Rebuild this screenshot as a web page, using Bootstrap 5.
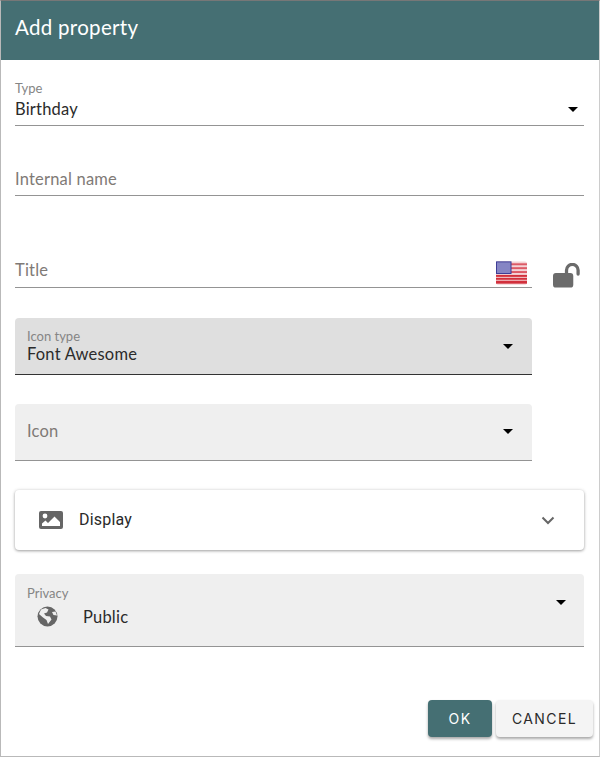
<!DOCTYPE html>
<html lang="en">
<head>
    <meta charset="UTF-8" />
    <meta name="viewport" content="width=device-width, initial-scale=1" />
    <title>Add property</title>
    <link href="https://cdn.jsdelivr.net/npm/bootstrap@5.3.0/dist/css/bootstrap.min.css" rel="stylesheet" />
    <style>
        html, body { height: 100%; }
        body { font-family: "Lato", "Liberation Sans", sans-serif; background: #fff; color: #2b2b2b; }
        .dialog { width: 600px; height: 757px; border: 1px solid #b9b9b9; border-top-color: #777; border-right-color: #ccc; }
        .dialog-head { height: 59px; background: #456f73; color: #fff; font-size: 20.5px; padding: 0 0 6px 14px; letter-spacing: .3px; }
        .dialog-body { padding: 0 15px 0 14px; }
        .field { position: relative; border-bottom: 1px solid #949494; }
        .field-label { font-size: 13px; line-height: 14px; color: #858585; }
        .field-value { font-size: 16.500px; line-height: 20px; color: #2b2b2b; letter-spacing: .2px; }
        .placeholder-text { font-size: 16.500px; line-height: 20px; color: #7f7a76; letter-spacing: .2px; }
        .caret-down { width: 0; height: 0; border-left: 5px solid transparent; border-right: 5px solid transparent; border-top: 5px solid #000; }
        .type-field { height: 59px; margin-top: 7px; padding-top: 14px; }
        .type-field .field-value { margin-top: 4px; }
        .type-field .caret-down { margin: 26px 6px 0 0; }
        .name-field { height: 46px; margin-top: 24px; padding-top: 19px; }
        .title-row { margin-top: 44px; }
        .title-field { width: 517px; height: 48px; padding-top: 20px; }
        .flag { position: absolute; right: 5px; top: 21px; }
        .lock { margin-left: 21px; }
        .filled { width: 517px; border-radius: 4px 4px 0 0; background: #efefef; padding-left: 12px; padding-right: 19px; }
        .filled.active { background: #dfdfdf; border-bottom-color: #333; height: 57px; margin-top: 30px; }
        .filled.active .field-label { margin-bottom: 1px; }
        .filled.icon-field { height: 57px; margin-top: 29px; padding-bottom: 2px; }
        .panel { height: 60px; margin-top: 29px; border-radius: 4px; background: #fff; box-shadow: 0 1px 3px rgba(0,0,0,.35), 0 0 4px rgba(0,0,0,.08); padding: 0 29px 0 24px; }
        .panel-title { font-family: "Roboto", sans-serif; font-size: 16px; color: #2a2a2a; letter-spacing: .2px; margin-left: 16px; }
        .privacy { width: auto; height: 73px; margin-top: 24px; padding: 12px 18px 0 12px; }
        .privacy-row { margin-top: 6px; }
        .globe { margin-left: 10px; }
        .privacy-row .field-value { margin-left: 25px; }
        .privacy .caret-down { margin-top: 14px; }
        .dialog-foot { margin-bottom: 19px; padding-right: 6px; gap: 4px; }
        .btn-ok, .btn-cancel { height: 37px; font-size: 14px; font-weight: 400; font-family: "Inter", sans-serif; letter-spacing: 1.4px; border: 0; border-radius: 4px; box-shadow: 0 2px 3px rgba(0,0,0,.35); padding: 0; }
        .btn-ok { width: 64px; background: #456f73; color: #fff; }
        .btn-ok:hover { background: #456f73; color: #fff; }
        .btn-cancel { width: 97px; background: #f4f4f4; color: #2a2a2a; }
    </style>
</head>
<body>
<div class="dialog d-flex flex-column">
    <div class="dialog-head d-flex align-items-center">Add property</div>

    <div class="dialog-body flex-grow-1">
        <div class="field type-field d-flex justify-content-between align-items-start">
            <div>
                <div class="field-label">Type</div>
                <div class="field-value">Birthday</div>
            </div>
            <div class="caret-down"></div>
        </div>

        <div class="field name-field">
            <div class="placeholder-text">Internal name</div>
        </div>

        <div class="title-row d-flex align-items-end">
            <div class="field title-field">
                <div class="placeholder-text">Title</div>
                <svg class="flag" width="31" height="24" viewBox="0 0 32 24">
                    <rect width="32" height="24" rx="2" fill="#f4d3d6"/>
                    <g fill="#dc5a66">
                        <rect y="2" width="32" height="2"/>
                        <rect y="6" width="32" height="2"/>
                        <rect y="10" width="32" height="2"/>
                    </g>
                    <g fill="#d2303c">
                        <rect y="14" width="32" height="2"/>
                        <rect y="17" width="32" height="2"/>
                        <rect y="20" width="32" height="3"/>
                    </g>
                    <rect x="0.5" y="0.5" width="15" height="12" fill="#8585c4" stroke="#3b3b96"/>
                </svg>
            </div>
            <svg class="lock" width="28" height="25" viewBox="0 0 29 25">
                <path d="M3 10h15a3 3 0 0 1 3 3v9a3 3 0 0 1-3 3H3a3 3 0 0 1-3-3v-9a3 3 0 0 1 3-3z" fill="#6b6b6b"/>
                <path d="M14 11V7a6 6 0 0 1 12 0v4" fill="none" stroke="#6b6b6b" stroke-width="3.4" stroke-linecap="round"/>
            </svg>
        </div>

        <div class="field filled active d-flex justify-content-between align-items-center">
            <div>
                <div class="field-label">Icon type</div>
                <div class="field-value">Font Awesome</div>
            </div>
            <div class="caret-down"></div>
        </div>

        <div class="field filled icon-field d-flex justify-content-between align-items-center">
            <div class="placeholder-text">Icon</div>
            <div class="caret-down"></div>
        </div>

        <div class="panel d-flex align-items-center">
            <svg width="24" height="18" viewBox="0 0 24 18">
                <path d="M2 0h20a2 2 0 0 1 2 2v14a2 2 0 0 1-2 2H2a2 2 0 0 1-2-2V2a2 2 0 0 1 2-2z" fill="#666"/>
                <circle cx="6" cy="5" r="2.4" fill="#fff"/>
                <path d="M3 15v-2.500l3.500-3 2.500 2.500 6.500-6.500L21 11v4z" fill="#fff"/>
            </svg>
            <div class="panel-title flex-grow-1">Display</div>
            <svg width="14" height="9" viewBox="0 0 14 9">
                <path d="M1.500 1.500 7 7l5.500-5.500" fill="none" stroke="#666" stroke-width="2"/>
            </svg>
        </div>

        <div class="field filled privacy d-flex justify-content-between align-items-start">
            <div class="flex-grow-1">
                <div class="field-label">Privacy</div>
                <div class="privacy-row d-flex align-items-center">
                    <svg class="globe" width="21" height="21" viewBox="0 0 21 21">
                        <circle cx="10.500" cy="10.500" r="10" fill="#666"/>
                        <path d="M4 3.500 8.500 2l3 1.500-1.500 3-3 1 2 2.500 4 .5 1.500 3-3.500 4.500-1.500-4-3.500-2.500L2 8zM15 6l3.500-.5 1.500 4-3.500-.5z" fill="#efefef"/>
                    </svg>
                    <div class="field-value">Public</div>
                </div>
            </div>
            <div class="caret-down"></div>
        </div>
    </div>

    <div class="dialog-foot d-flex justify-content-end">
        <button type="button" class="btn btn-ok">OK</button>
        <button type="button" class="btn btn-cancel">CANCEL</button>
    </div>
</div>
<script src="https://cdn.jsdelivr.net/npm/bootstrap@5.3.0/dist/js/bootstrap.bundle.min.js"></script>
</body>
</html>
